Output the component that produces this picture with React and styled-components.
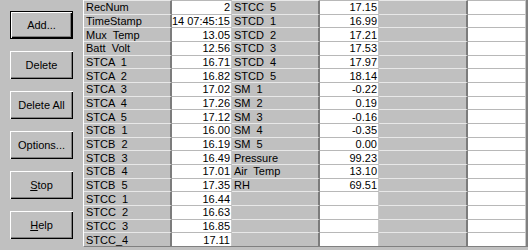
import React from "react";
import styled, { createGlobalStyle } from "styled-components";

const Global = createGlobalStyle`
  html, body { margin: 0; padding: 0; background: #c0c0c0; }
  body { font-family: "Liberation Sans", Arial, sans-serif; font-size: 11px; }
`;

const Window = styled.div`
  width: 528px;
  height: 250px;
  display: flex;
  background: #c0c0c0;
  overflow: hidden;
`;

const ButtonPanel = styled.div`
  width: 83px;
  flex: none;
  display: flex;
  flex-direction: column;
  gap: 12px;
  padding: 11px 0 0 10px;
  box-sizing: border-box;
`;

const Btn = styled.button`
  width: 63px;
  height: 28px;
  padding: 0;
  background: #c0c0c0;
  font-family: "Liberation Sans", Arial, sans-serif;
  font-size: 11px;
  color: #000;
  border: none;
  box-sizing: border-box;
  box-shadow: ${(p) =>
    p.$default
      ? "inset 0 0 0 1px #000, inset 1px 1px 0 1px #fff, inset -1px -1px 0 1px #000, inset -2px -2px 0 1px #808080"
      : "inset 1px 1px 0 #fff, inset -1px -1px 0 #000, inset -2px -2px 0 #808080"};
  u { text-decoration: underline; }
`;

const GridFrame = styled.div`
  flex: 1;
  height: 247px;
  box-sizing: border-box;
  border-left: 1px solid #fff;
  border-bottom: 1px solid #808080;
  display: flex;
`;

const Grid = styled.div`
  display: grid;
  grid-template-columns: 88px 60px 88px 59px 89px 58px;
  grid-template-rows: repeat(18, 1fr);
  height: 246px;
  border-right: 2px solid #808080;
`;

const Cell = styled.div`
  box-sizing: border-box;
  padding: 0 2px 0 2px;
  overflow: hidden;
  white-space: pre;
  line-height: 12px;
  display: flex;
  align-items: center;
  ${(p) =>
    p.$kind === "label"
      ? `
    background: #c0c0c0;
    border-top: 1px solid #e8e8e8;
    border-right: 2px solid #7c7c7c;
    justify-content: flex-start;
  `
      : `
    background: #fff;
    border-top: 1px solid #b8b8b8;
    border-right: 1px solid #c8c8c8;
    justify-content: flex-end;
    padding-right: 1px;
  `}
`;

const col1 = [
  ["RecNum", "2"],
  ["TimeStamp", "14 07:45:15"],
  ["Mux  Temp", "13.05"],
  ["Batt  Volt", "12.56"],
  ["STCA  1", "16.71"],
  ["STCA  2", "16.82"],
  ["STCA  3", "17.02"],
  ["STCA  4", "17.26"],
  ["STCA  5", "17.12"],
  ["STCB  1", "16.00"],
  ["STCB  2", "16.19"],
  ["STCB  3", "16.49"],
  ["STCB  4", "17.01"],
  ["STCB  5", "17.35"],
  ["STCC  1", "16.44"],
  ["STCC  2", "16.63"],
  ["STCC  3", "16.85"],
  ["STCC_4", "17.11"],
];

const col2 = [
  ["STCC  5", "17.15"],
  ["STCD  1", "16.99"],
  ["STCD  2", "17.21"],
  ["STCD  3", "17.53"],
  ["STCD  4", "17.97"],
  ["STCD  5", "18.14"],
  ["SM  1", "-0.22"],
  ["SM  2", "0.19"],
  ["SM  3", "-0.16"],
  ["SM  4", "-0.35"],
  ["SM  5", "0.00"],
  ["Pressure", "99.23"],
  ["Air  Temp", "13.10"],
  ["RH", "69.51"],
];

export default function App() {
  const rows = [];
  for (let i = 0; i < 18; i++) {
    const a = col1[i] || ["", ""];
    const b = col2[i] || ["", ""];
    rows.push(
      <React.Fragment key={i}>
        <Cell $kind="label">{a[0]}</Cell>
        <Cell $kind="value">{a[1]}</Cell>
        <Cell $kind="label">{b[0]}</Cell>
        <Cell $kind="value">{b[1]}</Cell>
        <Cell $kind="label" />
        <Cell $kind="value" />
      </React.Fragment>
    );
  }
  return (
    <Window>
      <Global />
      <ButtonPanel>
        <Btn $default>Add...</Btn>
        <Btn>Delete</Btn>
        <Btn>Delete All</Btn>
        <Btn>Options...</Btn>
        <Btn>
          <u>S</u>top
        </Btn>
        <Btn>
          <u>H</u>elp
        </Btn>
      </ButtonPanel>
      <GridFrame>
        <Grid>{rows}</Grid>
      </GridFrame>
    </Window>
  );
}
